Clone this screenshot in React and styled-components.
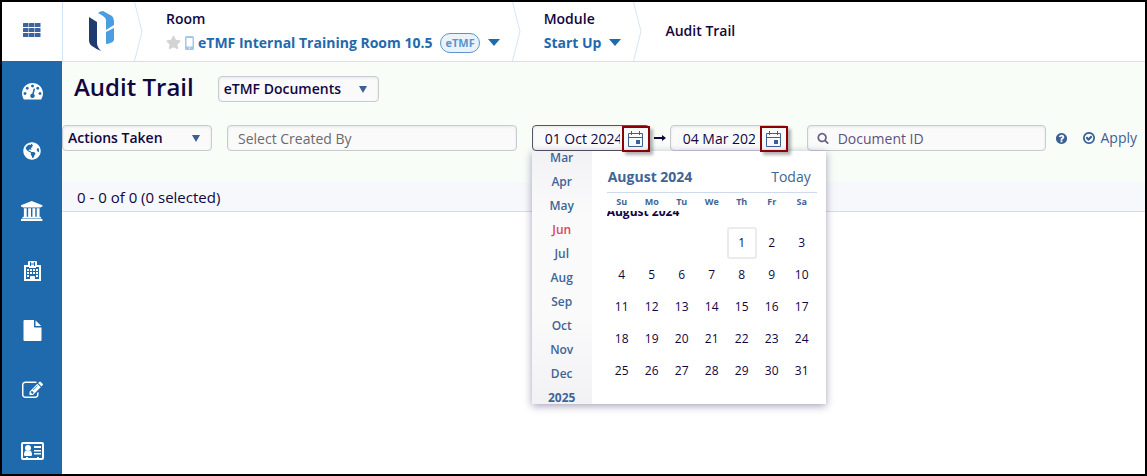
import React from 'react';
import styled, { createGlobalStyle } from 'styled-components';
import { FaGlobeAmericas, FaStar } from 'react-icons/fa';

const GlobalStyle = createGlobalStyle`
  * {
    box-sizing: border-box;
  }
  body {
    margin: 0;
    background: #fff;
    color: #12063f;
    font-family: 'Open Sans', 'Noto Sans', sans-serif;
    font-size: 14px;
    line-height: 20px;
  }
  button, input, select {
    font: inherit;
    color: inherit;
  }
  button {
    padding: 0;
    border: 0;
    background: none;
    cursor: pointer;
  }
  a {
    text-decoration: none;
  }
`;

const Shell = styled.div`
  display: flex;
  height: 100vh;
  border: 2px solid #000;
  overflow: hidden;
`;

const Sidebar = styled.nav`
  display: flex;
  flex-direction: column;
  flex: none;
  width: 60px;
  background: #1f69ad;
`;

const AppsButton = styled.button`
  display: flex;
  flex: none;
  align-items: center;
  justify-content: center;
  height: 59px;
  padding-bottom: 3px;
  background: #fff;
  color: #3a6096;
`;

const SideLink = styled.a`
  display: flex;
  flex: none;
  align-items: center;
  justify-content: center;
  height: 60px;
  padding-bottom: 1px;
  color: #fff;
`;

const Main = styled.main`
  flex: 1;
  min-width: 0;
`;

const TopBar = styled.header`
  display: flex;
  height: 60px;
  border-left: 1px solid #d3e3f3;
  border-bottom: 1px solid #dcdfe4;
`;

const LogoBox = styled.a`
  display: flex;
  align-items: center;
  justify-content: center;
  width: 71px;
  padding-left: 6px;
`;

const Crumb = styled.div`
  display: flex;
  flex-direction: column;
  justify-content: center;
  gap: 4px;
  padding: 0 12px 2px 23px;
  font-weight: 600;
`;

const CrumbRow = styled.div`
  display: flex;
  align-items: center;
  gap: 4px;
`;

const CrumbButton = styled.button`
  display: flex;
  align-items: center;
  gap: 8px;
  color: #1f69ad;
  font-weight: 700;
`;

const Tag = styled.span`
  padding: 0 4px;
  border: 1px solid #5b95cb;
  border-radius: 10px;
  background: #eaf2fa;
  color: #5b95cb;
  font-size: 11px;
  line-height: 18px;
`;

const Filters = styled.section`
  height: 120px;
  background: #f8fdf8;
`;

const TitleRow = styled.div`
  display: flex;
  align-items: center;
  gap: 24px;
  padding: 11px 12px 0;
`;

const Title = styled.h1`
  margin: 0;
  padding-bottom: 4px;
  font-size: 24px;
  font-weight: 600;
  line-height: 28px;
`;

const FilterRow = styled.form`
  display: flex;
  align-items: center;
  margin-top: 20px;
  padding-right: 8px;
`;

const SelectBox = styled.label`
  position: relative;
  display: block;
  flex: none;
  width: ${(props) => props.$width}px;
  margin-right: 15px;
  svg {
    position: absolute;
    top: 10px;
    right: 12px;
    pointer-events: none;
  }
`;

const fieldStyle = `
  display: block;
  width: 100%;
  height: 26px;
  border: 1px solid #c6cbd2;
  border-radius: 4px;
  background: #fafafb;
  box-shadow: inset 0 1px 3px rgba(0, 0, 0, 0.08);
  outline: none;
`;

const Select = styled.select`
  ${fieldStyle}
  appearance: none;
  padding: 0 24px 0 5px;
  font-weight: 600;
`;

const TextField = styled.label`
  position: relative;
  flex: ${(props) => props.$grow} 1 0;
  min-width: 0;
  margin-right: 15px;
  svg {
    position: absolute;
    top: 7px;
    left: 10px;
    color: #6a5f87;
  }
`;

const TextInput = styled.input`
  ${fieldStyle}
  padding: 0 10px 0 ${(props) => (props.$icon ? 30 : 10)}px;
  &::placeholder {
    color: ${(props) => (props.$icon ? '#5d5180' : '#6b6b6b')};
    opacity: 1;
  }
`;

const DateField = styled.div`
  position: relative;
  flex: none;
  width: 118px;
`;

const DateInput = styled.input`
  ${fieldStyle}
  padding: 0 ${(props) => (props.$active ? 29 : 32)}px 0 12px;
  border-color: ${(props) => (props.$active ? '#55555f' : '#c6cbd2')};
`;

const DateButton = styled.button`
  position: absolute;
  top: 1px;
  right: 0;
  z-index: 3;
  display: flex;
  align-items: center;
  justify-content: center;
  width: 28px;
  height: 26px;
  border: 2px solid #8c0008;
  box-shadow: 3px 3px 3px rgba(0, 0, 0, 0.3);
`;

const Arrow = styled.svg`
  flex: none;
  margin: 0 4px;
`;

const HelpButton = styled.button`
  display: flex;
  margin-right: 14px;
  margin-left: -6px;
  color: #3a6096;
`;

const ApplyButton = styled.button`
  display: flex;
  align-items: center;
  gap: 4px;
  color: #3a6096;
`;

const Picker = styled.div`
  position: absolute;
  top: 26px;
  left: 0;
  z-index: 2;
  display: flex;
  width: 294px;
  height: 253px;
  background: #fff;
  box-shadow: 0 2px 8px rgba(30, 20, 80, 0.4);
`;

const MonthList = styled.div`
  display: flex;
  flex-direction: column;
  justify-content: center;
  width: 60px;
  overflow: hidden;
  background: linear-gradient(#f2f2f5, #fafafb 25%, #fafafb 65%, #f2f2f5);
`;

const MonthButton = styled.button`
  flex: none;
  height: 24px;
  color: ${(props) => (props.$current ? '#d9465a' : '#3f6596')};
  font-size: 12px;
  font-weight: ${(props) => (props.$year ? 700 : 600)};
`;

const Calendar = styled.div`
  flex: 1;
  padding: 10px 9px 0 15px;
`;

const CalendarHead = styled.div`
  display: flex;
  align-items: center;
  justify-content: space-between;
  height: 32px;
  padding: 0 6px 0 1px;
  border-bottom: 1px solid #cfdbea;
  color: #3f6596;
`;

const Days = styled.table`
  width: 100%;
  border-collapse: collapse;
  table-layout: fixed;
  font-size: 12px;
  text-align: center;
  th {
    height: 18px;
    padding: 0;
    color: #3f6596;
    font-size: 9px;
    line-height: 18px;
  }
  td {
    height: 32px;
    padding: 0;
  }
`;

// the heading is half scrolled under the weekday row
const MonthName = styled.div`
  display: flex;
  align-items: center;
  height: 1px;
  font-size: 12px;
  font-weight: 700;
  line-height: 16px;
`;

const MonthClip = styled.td`
  && {
    height: 16px;
    text-align: left;
    vertical-align: top;
  }
  > div {
    height: 16px;
    overflow: hidden;
  }
`;

const DayButton = styled.button`
  width: 30px;
  height: 32px;
  border: ${(props) => (props.$focused ? '2px solid #ebebeb' : 0)};
  border-radius: 3px;
`;

const Summary = styled.div`
  height: 30px;
  padding: 0 15px;
  border-bottom: 1px solid #d3dce8;
  background: #f7f8fb;
  font-size: 15px;
  line-height: 30px;
`;

const Glyph = ({ d, size = 18, width = 1792, ...rest }) => (
  <svg width={(size * width) / 1792} height={size} viewBox={`0 0 ${width} 1792`} fill="currentColor" {...rest}>
    <path d={d} />
  </svg>
);

const paths = {
  gauge:
    'M384 1152q0-53-37.5-90.5t-90.5-37.5-90.5 37.5-37.5 90.5 37.5 90.5 90.5 37.5 90.5-37.5 37.5-90.5zm192-448q0-53-37.5-90.5t-90.5-37.5-90.5 37.5-37.5 90.5 37.5 90.5 90.5 37.5 90.5-37.5 37.5-90.5zm428 481l101-382q6-26-7.5-48.5t-38.5-29.5-48 6.5-30 39.5l-101 382q-60 5-107 43.5t-63 98.5q-20 77 20 146t117 89 146-20 89-117q16-60-6-117t-72-91zm660-33q0-53-37.5-90.5t-90.5-37.5-90.5 37.5-37.5 90.5 37.5 90.5 90.5 37.5 90.5-37.5 37.5-90.5zm-640-640q0-53-37.5-90.5t-90.5-37.5-90.5 37.5-37.5 90.5 37.5 90.5 90.5 37.5 90.5-37.5 37.5-90.5zm448 192q0-53-37.5-90.5t-90.5-37.5-90.5 37.5-37.5 90.5 37.5 90.5 90.5 37.5 90.5-37.5 37.5-90.5zm320 448q0 261-141 483-19 29-54 29h-1402q-35 0-54-29-141-221-141-483 0-182 71-348t191-286 286-191 348-71 348 71 286 191 191 286 71 348z',
  bank: 'M960 0l960 384v128h-128q0 26-20.500 45t-48.500 19h-1526q-28 0-48.500-19t-20.500-45h-128v-128zm-704 640h256v768h128v-768h256v768h128v-768h256v768h128v-768h256v768h59q28 0 48.500 19t20.500 45v64h-1664v-64q0-26 20.500-45t48.500-19h59v-768zm1595 960q28 0 48.500 19t20.500 45v128h-1920v-128q0-26 20.500-45t48.500-19h1782z',
  file: 'M1152 512v-472q22 14 36 28l408 408q14 14 28 36h-472zm-128 32q0 40 28 68t68 28h544v1056q0 40-28 68t-68 28h-1344q-40 0-68-28t-28-68v-1600q0-40 28-68t68-28h800v544z',
  edit: 'M888 1184l116-116-152-152-116 116v56h96v96h56zm440-720q-16-16-33 1l-350 350q-17 17-1 33t33-1l350-350q17-17 1-33zm80 594v190q0 119-84.500 203.500t-203.500 84.500h-832q-119 0-203.500-84.500t-84.500-203.500v-832q0-119 84.500-203.500t203.500-84.500h832q63 0 117 25 15 7 18 23 3 17-9 29l-49 49q-14 14-32 8-23-6-45-6h-832q-66 0-113 47t-47 113v832q0 66 47 113t113 47h832q66 0 113-47t47-113v-126q0-13 9-22l64-64q15-15 35-7t20 29zm-96-738l288 288-672 672h-288v-288zm444 132l-92 92-288-288 92-92q28-28 68-28t68 28l152 152q28 28 28 68t-28 68z',
  search:
    'M1216 832q0-185-131.5-316.5t-316.5-131.5-316.5 131.5-131.5 316.5 131.5 316.5 316.5 131.5 316.5-131.5 131.5-316.5zm512 832q0 52-38 90t-90 38q-54 0-90-38l-343-342q-179 124-399 124-143 0-273.5-55.5t-225-150-150-225-55.5-273.5 55.5-273.5 150-225 225-150 273.5-55.5 273.5 55.5 225 150 150 225 55.5 273.5q0 220-124 399l343 343q37 37 37 90z',
  help: 'M1024 1376v-192q0-14-9-23t-23-9h-192q-14 0-23 9t-9 23v192q0 14 9 23t23 9h192q14 0 23-9t9-23zm256-672q0-88-55.5-163t-138.5-116-170-41q-243 0-371 213-15 24 8 42l132 100q7 6 19 6 16 0 25-12 53-68 86-92 34-24 86-24 48 0 85.5 26t37.5 59q0 38-20 61t-68 45q-63 28-115.5 86.5t-52.5 125.5v36q0 14 9 23t23 9h192q14 0 23-9t9-23q0-19 21.5-49.5t54.5-49.5q32-18 49-28.5t46-35 44.5-48 28-60.5 12.5-81zm384 192q0 209-103 385.5t-279.5 279.5-385.5 103-385.5-103-279.5-279.5-103-385.5 103-385.5 279.5-279.5 385.5-103 385.5 103 279.5 279.5 103 385.5z',
  check:
    'M1299 813l-422 422q-19 19-45 19t-45-19l-294-294q-19-19-19-45t19-45l102-102q19-19 45-19t45 19l147 147 275-275q19-19 45-19t45 19l102 102q19 19 19 45t-19 45zm141 83q0-148-73-273t-198-198-273-73-273 73-198 198-73 273 73 273 198 198 273 73 273-73 198-198 73-273zm224 0q0 209-103 385.5t-279.5 279.5-385.5 103-385.5-103-279.5-279.5-103-385.5 103-385.5 279.5-279.5 385.5-103 385.5 103 279.5 279.5 103 385.5z',
};

const AppsIcon = () => (
  <svg width="19" height="15" fill="#3a64a0">
    {[0, 5, 10].map((y) =>
      [0, 6, 12].map((x) => <rect key={`${x}-${y}`} x={x} y={y} width="5.500" height="4" rx="0.500" />)
    )}
  </svg>
);

const HospitalIcon = () => (
  <svg width="17" height="21" viewBox="0 0 17 21">
    <path
      fill="#fff"
      fillRule="evenodd"
      d="M0 5h4V2q0-1 1-1h7q1 0 1 1v3h4v16H0zM2 7v12h4v-2q0-1 1-1h3q1 0 1 1v2h4V7h-3v1H5V7zM6 2v4h1V4.500h3V6h1V2h-1v1.500H7V2z"
    />
    {[9, 12, 15].map((y) =>
      [3, 6, 9, 12].map((x) =>
        y === 15 && (x === 6 || x === 9) ? null : (
          <rect key={`${x}-${y}`} x={x} y={y} width="2" height="2" fill="#fff" />
        )
      )
    )}
  </svg>
);

const CardIcon = () => (
  <svg width="23" height="18" viewBox="0 0 23 18" fill="#fff">
    <path
      fillRule="evenodd"
      d="M2 0h19q2 0 2 2v14q0 2-2 2H2q-2 0-2-2V2q0-2 2-2zM2 2v14h3v-1h2v1h9v-1h2v1h3V2z"
    />
    <circle cx="7" cy="6" r="3" />
    <path d="M3 13q0-4 2-4.500 2 1.500 4 0 2 .5 2 4.500 0 1-1 1H4q-1 0-1-1zM13 4h7v2h-7zM13 8h7v1.500h-7zM13 11h7v1.500h-7z" />
  </svg>
);

const Logo = () => (
  <svg width="28" height="41" viewBox="0 0 28 41">
    <path fill="#213b70" d="M1 6l8 5v21q0 4 4 8-5-2-9-5-3-2-3-6z" />
    <path fill="#4a9de0" d="M10 2q2-2 5-2l9 5q2 2 2 5v4l-8 5V9q0-3-8-7zM18 21l8-4v12q-1 3-8 4z" />
  </svg>
);

const Caret = ({ large }) => (
  <svg width={large ? 12 : 8} height="7" viewBox="0 0 12 7" preserveAspectRatio="none">
    <path fill={large ? '#1f69ad' : '#3a6096'} d="M0 0h12L6 7z" />
  </svg>
);

const Chevron = () => (
  <svg width="9" height="59" viewBox="0 0 9 59" fill="none">
    <path d="M.5 0L8 29.500.5 59" stroke="#d3e5f5" />
  </svg>
);

const CalendarIcon = () => (
  <svg width="15" height="16" viewBox="0 0 15 16" fill="none" stroke="#3a6096">
    <path d="M.5 2.500h14v13H.5zM.5 6.500h14M3.500 0v4M11.500 0v4" />
    <path fill="#3a6096" stroke="none" d="M8 9h4v4H8z" />
  </svg>
);

const PhoneIcon = () => (
  <svg width="9" height="14" viewBox="0 0 9 14">
    <path
      fill="#a3c7e8"
      fillRule="evenodd"
      d="M1.500 0h6Q9 0 9 1.500v11Q9 14 7.500 14h-6Q0 14 0 12.500v-11Q0 0 1.500 0zM1.500 2v8.500h6V2zM4 11.500v1.200h1v-1.200z"
    />
  </svg>
);

const sideItems = [
  { label: 'Dashboard', icon: <Glyph d={paths.gauge} size={21} /> },
  { label: 'Countries', icon: <FaGlobeAmericas size={18} /> },
  { label: 'Institutions', icon: <Glyph d={paths.bank} size={20} width={1920} /> },
  { label: 'Sites', icon: <HospitalIcon /> },
  { label: 'Documents', icon: <Glyph d={paths.file} size={21} /> },
  { label: 'Edit', icon: <Glyph d={paths.edit} size={21} /> },
  { label: 'Contacts', icon: <CardIcon /> },
];

const months = ['Mar', 'Apr', 'May', 'Jun', 'Jul', 'Aug', 'Sep', 'Oct', 'Nov', 'Dec', '2025'];
const weekdays = ['Su', 'Mo', 'Tu', 'We', 'Th', 'Fr', 'Sa'];
// August 2024 starts on a Thursday
const weeks = [0, 1, 2, 3, 4].map((week) => weekdays.map((_, i) => week * 7 + i - 3));

function DatePicker() {
  return (
    <Picker>
      <MonthList>
        {months.map((month) => (
          <MonthButton type="button" key={month} $current={month === 'Jun'} $year={month === '2025'}>
            {month}
          </MonthButton>
        ))}
      </MonthList>
      <Calendar>
        <CalendarHead>
          <strong>August 2024</strong>
          <button type="button">Today</button>
        </CalendarHead>
        <Days>
          <thead>
            <tr>
              {weekdays.map((day) => (
                <th key={day}>{day}</th>
              ))}
            </tr>
          </thead>
          <tbody>
            <tr>
              <MonthClip colSpan={7}>
                <div>
                  <MonthName>August 2024</MonthName>
                </div>
              </MonthClip>
            </tr>
            {weeks.map((week) => (
              <tr key={week[0]}>
                {week.map((day) => (
                  <td key={day}>
                    {day > 0 && (
                      <DayButton type="button" $focused={day === 1}>
                        {day}
                      </DayButton>
                    )}
                  </td>
                ))}
              </tr>
            ))}
          </tbody>
        </Days>
      </Calendar>
    </Picker>
  );
}

function Breadcrumbs() {
  return (
    <TopBar>
      <LogoBox href="#" aria-label="Home">
        <Logo />
      </LogoBox>
      <Chevron />
      <Crumb>
        <span>Room</span>
        <CrumbRow>
          <FaStar size={15} color="#d3d3d3" />
          <PhoneIcon />
          <CrumbButton>
            eTMF Internal Training Room 10.5
            <Tag>eTMF</Tag>
            <Caret large />
          </CrumbButton>
        </CrumbRow>
      </Crumb>
      <Chevron />
      <Crumb>
        <span>Module</span>
        <CrumbButton>
          Start Up
          <Caret large />
        </CrumbButton>
      </Crumb>
      <Chevron />
      <Crumb>Audit Trail</Crumb>
    </TopBar>
  );
}

function App() {
  return (
    <>
      <GlobalStyle />
      <Shell>
        <Sidebar>
          <AppsButton aria-label="Apps">
            <AppsIcon />
          </AppsButton>
          {sideItems.map((item) => (
            <SideLink href="#" key={item.label} aria-label={item.label}>
              {item.icon}
            </SideLink>
          ))}
        </Sidebar>
        <Main>
          <Breadcrumbs />
          <Filters>
            <TitleRow>
              <Title>Audit Trail</Title>
              <SelectBox $width={161}>
                <Select aria-label="Record type">
                  <option>eTMF Documents</option>
                </Select>
                <Caret />
              </SelectBox>
            </TitleRow>
            <FilterRow onSubmit={(e) => e.preventDefault()}>
              <SelectBox $width={150}>
                <Select aria-label="Actions taken">
                  <option>Actions Taken</option>
                </Select>
                <Caret />
              </SelectBox>
              <TextField $grow={29}>
                <TextInput aria-label="Created by" placeholder="Select Created By" />
              </TextField>
              <DateField>
                <DateInput aria-label="From date" defaultValue="01 Oct 2024" $active />
                <DateButton type="button" aria-label="Open from date">
                  <CalendarIcon />
                </DateButton>
                <DatePicker />
              </DateField>
              <Arrow width="12" height="8" viewBox="0 0 12 8">
                <path d="M0 3h8V1l4 3-4 3V5H0z" fill="#12063f" />
              </Arrow>
              <DateField>
                <DateInput aria-label="To date" defaultValue="04 Mar 2024" />
                <DateButton type="button" aria-label="Open to date">
                  <CalendarIcon />
                </DateButton>
              </DateField>
              <Arrow width="11" height="8" />
              <TextField $grow={24}>
                <Glyph d={paths.search} size={12} />
                <TextInput aria-label="Document ID" placeholder="Document ID" $icon />
              </TextField>
              <HelpButton type="button" aria-label="Help">
                <Glyph d={paths.help} size={13} />
              </HelpButton>
              <ApplyButton type="submit">
                <Glyph d={paths.check} size={14} />
                Apply
              </ApplyButton>
            </FilterRow>
          </Filters>
          <Summary>0 - 0 of 0 (0 selected)</Summary>
        </Main>
      </Shell>
    </>
  );
}

export default App;
